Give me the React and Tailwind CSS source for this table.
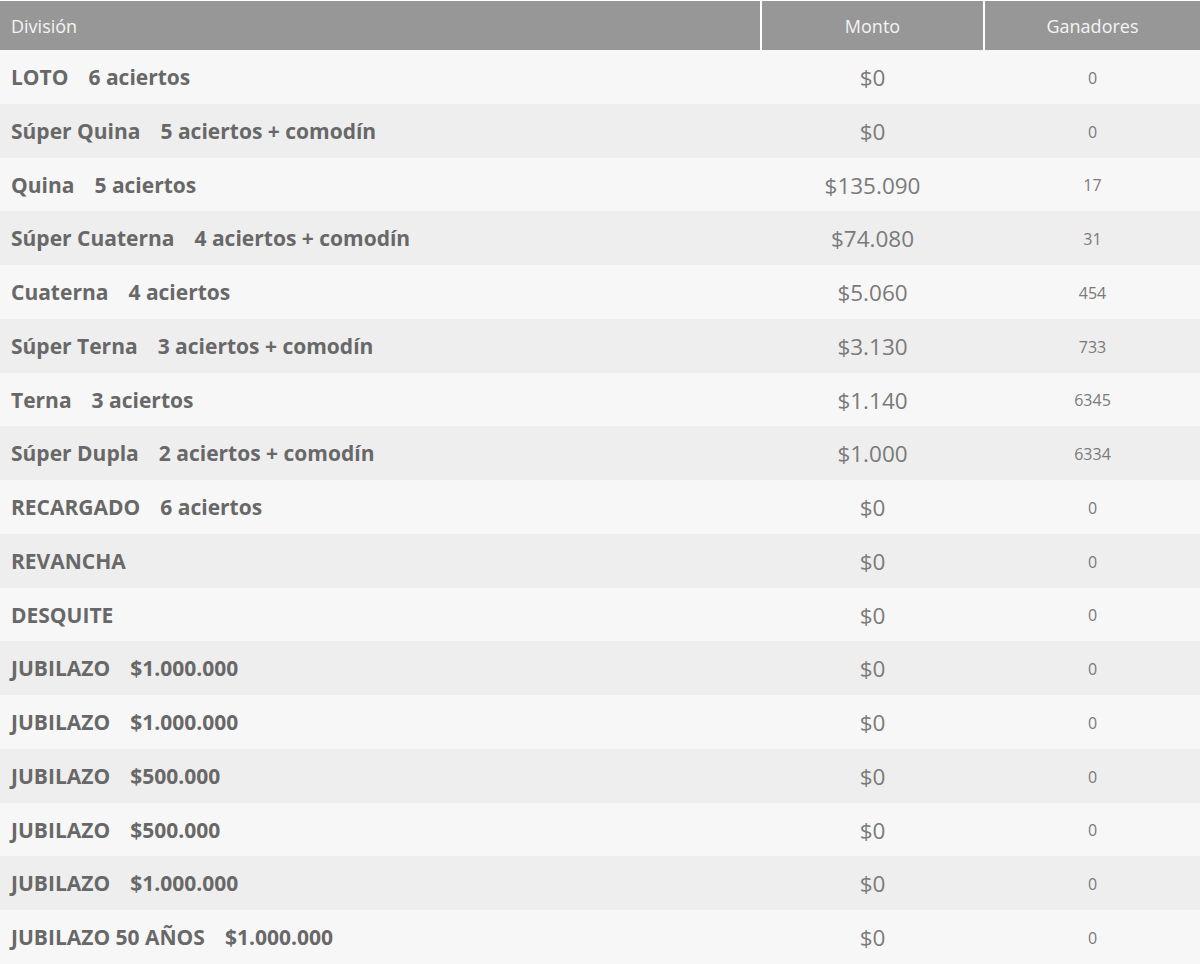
import React from "react";

const rows = [
  ["LOTO", "6 aciertos", "$0", "0"],
  ["Súper Quina", "5 aciertos + comodín", "$0", "0"],
  ["Quina", "5 aciertos", "$135.090", "17"],
  ["Súper Cuaterna", "4 aciertos + comodín", "$74.080", "31"],
  ["Cuaterna", "4 aciertos", "$5.060", "454"],
  ["Súper Terna", "3 aciertos + comodín", "$3.130", "733"],
  ["Terna", "3 aciertos", "$1.140", "6345"],
  ["Súper Dupla", "2 aciertos + comodín", "$1.000", "6334"],
  ["RECARGADO", "6 aciertos", "$0", "0"],
  ["REVANCHA", "", "$0", "0"],
  ["DESQUITE", "", "$0", "0"],
  ["JUBILAZO", "$1.000.000", "$0", "0"],
  ["JUBILAZO", "$1.000.000", "$0", "0"],
  ["JUBILAZO", "$500.000", "$0", "0"],
  ["JUBILAZO", "$500.000", "$0", "0"],
  ["JUBILAZO", "$1.000.000", "$0", "0"],
  ["JUBILAZO 50 AÑOS", "$1.000.000", "$0", "0"],
];

export default function App() {
  return (
    <div className="w-[1200px] h-[964px] bg-white overflow-hidden font-['Open_Sans',sans-serif]">
      <div className="flex h-[49px] mt-[1px] gap-x-[2px] text-[18px] text-[#f4f4f4]">
        <div className="w-[760px] bg-[#979797] flex items-center pl-[11px] pt-[2px]">División</div>
        <div className="w-[221px] bg-[#979797] flex items-center justify-center pt-[2px]">Monto</div>
        <div className="flex-1 bg-[#979797] flex items-center justify-center pt-[2px]">Ganadores</div>
      </div>
      {rows.map((r, i) => (
        <div
          key={i}
          className={`flex h-[53.76px] items-center pt-[2px] ${i % 2 === 0 ? "bg-[#f7f7f7]" : "bg-[#eeeeee]"}`}
        >
          <div className="w-[762px] pl-[11px] text-[21px] font-bold text-[#686868] whitespace-nowrap">
            {r[0]}
            {r[1] && <span className="ml-[20px]">{r[1]}</span>}
          </div>
          <div className="w-[221px] text-center text-[22.5px] text-[#7a7a7a]">{r[2]}</div>
          <div className="flex-1 text-center text-[16px] text-[#7a7a7a] pl-[2px]">{r[3]}</div>
        </div>
      ))}
    </div>
  );
}
